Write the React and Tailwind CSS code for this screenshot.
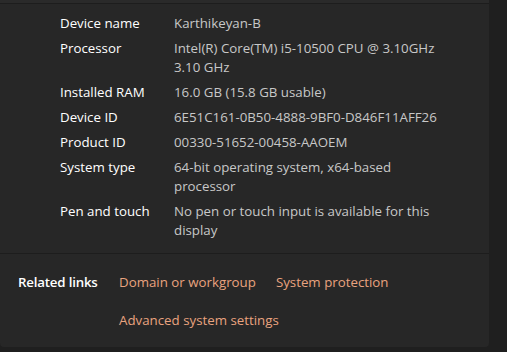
const rows = [
  ["Device name", "Karthikeyan-B"],
  ["Processor", "Intel(R) Core(TM) i5-10500 CPU @ 3.10GHz   3.10 GHz"],
  ["Installed RAM", "16.0 GB (15.8 GB usable)"],
  ["Device ID", "6E51C161-0B50-4888-9BF0-D846F11AFF26"],
  ["Product ID", "00330-51652-00458-AAOEM"],
  ["System type", "64-bit operating system, x64-based processor"],
  ["Pen and touch", "No pen or touch input is available for this display"],
];

export default function App() {
  return (
    <div
      className="w-[507px] h-[352px] bg-[#1f1f1f] pr-[18px] overflow-hidden text-[13.3px] leading-[19px]"
      style={{ fontFamily: "'Open Sans', sans-serif" }}
    >
      <div className="bg-[#2a2a2a] h-[3px]" />
      <div className="h-px bg-[#1d1d1d]" />
      <div className="bg-[#272727] pl-[60px] pt-[10px] pb-[13px] flex flex-col gap-[6px] border-b border-[#1d1d1d]">
        {rows.map(([k, v]) => (
          <div key={k} className="flex">
            <div className="w-[114px] shrink-0 text-[#ffffff]">{k}</div>
            <div className="w-[272px] text-[#c8c8c8]">
              {k === "Processor" ? (
                <>
                  Intel(R) Core(TM) i5-10500 CPU @ 3.10GHz
                  <br />
                  3.10 GHz
                </>
              ) : (
                v
              )}
            </div>
          </div>
        ))}
      </div>
      <div className="bg-[#272727] h-[93px] rounded-b-[4px] flex pl-[18px] pt-[19px]">
        <div className="w-[101px] shrink-0 font-semibold text-white tracking-[-0.2px]">Related links</div>
        <div className="flex flex-wrap gap-x-[20px] gap-y-[19px] w-[300px] content-start text-[#e9a37f]">
          <span>Domain or workgroup</span>
          <span>System protection</span>
          <span>Advanced system settings</span>
        </div>
      </div>
    </div>
  );
}
